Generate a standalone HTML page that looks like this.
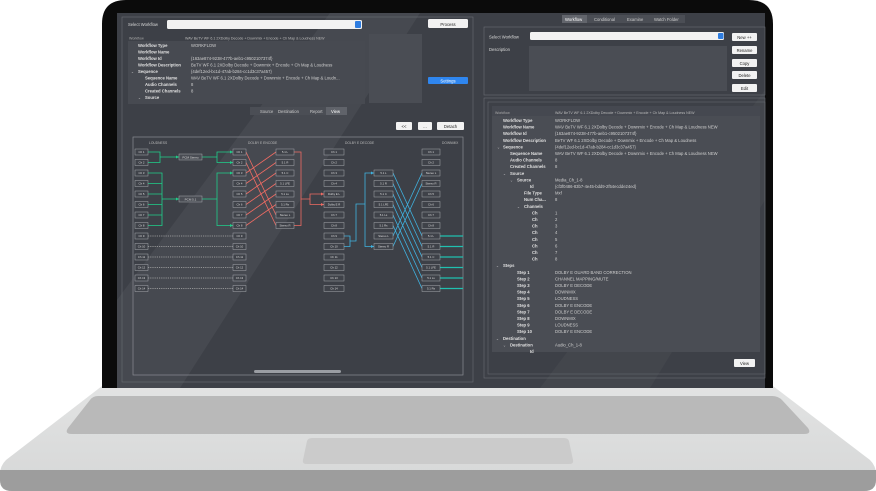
<!DOCTYPE html>
<html><head><meta charset="utf-8"><style>
html,body{margin:0;padding:0;background:#fff;width:876px;height:491px;overflow:hidden}
svg{display:block;font-family:"Liberation Sans",sans-serif}
</style></head><body>
<svg width="876" height="491" viewBox="0 0 876 491" xmlns="http://www.w3.org/2000/svg">
<defs>
<linearGradient id="base" x1="0" y1="0" x2="0" y2="1"><stop offset="0" stop-color="#e2e3e3"/><stop offset="1" stop-color="#d6d7d7"/></linearGradient>
</defs>
<!-- base -->
<path d="M102 386 L773 386 L870 460 Q876 466 876 474 L876 480 Q876 491 864 491 L12 491 Q0 491 0 480 L0 474 Q0 466 6 460 Z" fill="url(#base)"/>
<path d="M0 470 L876 470 L876 480 Q876 491 864 491 L12 491 Q0 491 0 480 Z" fill="#9d9d9d"/>
<path d="M98 396 L772 396 Q778 396 782 400 L808 428 Q812 434 804 434 L72 434 Q64 434 68 428 L90 400 Q93 396 98 396 Z" fill="#b9b9b9"/>
<path d="M312 438 L564 438 Q568 438 569 441 L573 460 Q574 464 569 464 L307 464 Q302 464 303 460 L307 441 Q308 438 312 438 Z" fill="#cbcbcb"/>
<!-- bezel -->
<path d="M126 0 L749 0 Q773 0 773 24 L773 388 L102 388 L102 24 Q102 0 126 0 Z" fill="#0b0b0b"/>
<rect x="117" y="13" width="648" height="375" fill="#3d4047"/>
<polygon points="117,300 330,13 420,13 180,388 117,388" fill="#ffffff" opacity="0.05"/>
<polygon points="540,388 765,90 765,200 650,388" fill="#ffffff" opacity="0.03"/>

<g font-size="4.2" fill="#d8d8d8">
<!-- LEFT PANEL top -->
<text x="128" y="26">Select Workflow</text>
<rect x="167" y="20" width="195" height="9" rx="1.5" fill="#f2f2f2"/>
<rect x="355" y="21" width="6" height="7" rx="1" fill="#2f7de0"/>
<rect x="428" y="19" width="40" height="9" rx="1.5" fill="#f2f2f2"/>
<text x="448" y="26" text-anchor="middle" fill="#222">Process</text>
<rect x="128" y="41" width="237" height="63" fill="#474a51"/>
<text x="129" y="39.5" fill="#aaa" font-size="3.6">Workflow</text>
<text x="185" y="39.5" fill="#bbb" font-size="3.6">WAV BeTV WF 6.1 2XDolby Decode + Downmix + Encode + Ch Map &amp; Loudness NEW</text>
<rect x="369" y="34" width="53" height="69" fill="#4a4d54"/>
<rect x="428" y="77" width="40" height="7" rx="1" fill="#2f86ef"/>
<text x="448" y="82.5" text-anchor="middle" fill="#fff">Settings</text>
<g font-weight="bold" fill="#e0e0e0">
<text x="138" y="47">Workflow Type</text><text x="138" y="53.5">Workflow Name</text><text x="138" y="60">Workflow Id</text><text x="138" y="66.5">Workflow Description</text><text x="138" y="73">Sequence</text><text x="145" y="79.5">Sequence Name</text><text x="145" y="86">Audio Channels</text><text x="145" y="92.5">Created Channels</text><text x="145" y="99">Source</text>
</g>
<text x="131" y="73" font-size="3.5">⌄</text><text x="138" y="99" font-size="3.5">⌄</text>
<g fill="#cfcfcf">
<text x="191" y="47">WORKFLOW</text><text x="191" y="60">{163ae874-9238-477b-aeb1-c9502107374f}</text><text x="191" y="66.5">BeTV WF 6.1 2XDolby Decode + Downmix + Encode + Ch Map &amp; Loudness</text><text x="191" y="73">{4def12ed-bc1d-47ab-b284-cc1d3c37a457}</text><text x="191" y="79.5">WAV BeTV WF 6.1 2XDolby Decode + Downmix + Encode + Ch Map &amp; Loudn...</text><text x="191" y="86">8</text><text x="191" y="92.5">8</text>
</g>
<!-- tabs -->
<rect x="250" y="107" width="97" height="8" fill="#4b4e55"/>
<rect x="326" y="107" width="21" height="8" fill="#60636a"/>
<text x="260" y="113" fill="#ccc">Source</text><text x="278" y="113" fill="#ccc">Destination</text><text x="310" y="113" fill="#ccc">Report</text><text x="331" y="113" fill="#fff">View</text>
<rect x="396" y="122" width="16" height="8" rx="1" fill="#f2f2f2"/><text x="404" y="128" text-anchor="middle" fill="#222">&lt;&lt;</text>
<rect x="418" y="122" width="14" height="8" rx="1" fill="#f2f2f2"/><text x="425" y="128" text-anchor="middle" fill="#222">...</text>
<rect x="437" y="122" width="27" height="8" rx="1" fill="#f2f2f2"/><text x="450.5" y="128" text-anchor="middle" fill="#222">Detach</text>
<rect x="122" y="17" width="351" height="365" fill="none" stroke="#6a6d73" stroke-width="0.6"/>
<rect x="133" y="137" width="330" height="238" fill="none" stroke="#8a8d93" stroke-width="0.7"/>
<rect x="254" y="370" width="87" height="3" rx="1.5" fill="#9a9da3"/>

<!-- DIAGRAM -->
<g font-size="3.3" fill="#bbb">
<text x="149" y="144">LOUDNESS</text><text x="248" y="144">DOLBY E ENCODE</text><text x="345" y="144">DOLBY E DECODE</text><text x="442" y="144">DOWNMIX</text>
</g>
<g fill="none" stroke-width="0.8">
<!-- green -->
<g stroke="#1fcf8a">
<path d="M148 152H160V162.5H148M160 157H179M202 157H217V152H233M217 157V162.5H233"/>
<path d="M148 173H162V225.5H148M162 199H179M202 199H217V173H233M217 199V225.5H233"/>
<path d="M148 183.5H162M148 194H162M148 204.5H162M148 215H162"/>
</g>
<!-- dashed -->
<g stroke="#aaa" stroke-dasharray="1.2 1">
<path d="M148 236H233M148 246.5H233M148 257H233M148 267.5H233M148 278H233M148 288.5H233"/>
</g>
<!-- red -->
<g stroke="#ef6b63">
<path d="M246 152L276 215M246 162.5L276 225.5M246 173L276 152M246 183.5L276 162.5M246 194L276 173M246 204.5L276 183.5M246 215L276 194M246 225.5L276 204.5"/>
<path d="M294 152H301V225.5H294M301 199H310V194H324M310 199V204.5H324"/>
</g>
<!-- blue -->
<g stroke="#3fb2e0">
<path d="M344 236H350V246.5H344M350 241H356V204H365V173H374M365 204V246.5H374"/>
<path d="M393 173L422 236M393 183.5L422 246.5M393 194L422 257M393 204.5L422 267.5M393 215L422 278M393 225.5L422 288.5M393 236L422 173M393 246.5L422 183.5"/>
</g>
<g stroke="#20c0b0" stroke-width="1.2"><path d="M440 236H463M440 246.5H463M440 257H463M440 267.5H463M440 278H463M440 288.5H463"/></g>
</g>
<g fill="#1fcf8a"><path d="M233 152l-3-1.5v3zM233 162.5l-3-1.5v3zM233 173l-3-1.5v3zM233 225.5l-3-1.5v3zM179 157l-3-1.5v3zM179 199l-3-1.5v3z"/></g>
<g fill="#ef6b63"><path d="M324 194l-3-1.5v3zM324 204.5l-3-1.5v3z"/></g>
<g fill="#3fb2e0"><path d="M374 173l-3-1.5v3zM374 246.5l-3-1.5v3z"/></g>
<g fill="#4a4d54" stroke="#a5a8ad" stroke-width="0.5">
<rect x="179" y="154" width="23" height="6"/><rect x="179" y="196" width="23" height="6"/>
</g>
<g font-size="3" fill="#ddd"><text x="190.5" y="158.3" text-anchor="middle">PCM Stereo</text><text x="190.5" y="200.3" text-anchor="middle">PCM 5.1</text></g>
<g id="boxes" fill="#3f4249" stroke="#a5a8ad" stroke-width="0.5">
<rect x="135" y="149" width="13" height="6"/><rect x="135" y="159.5" width="13" height="6"/><rect x="135" y="170" width="13" height="6"/><rect x="135" y="180.5" width="13" height="6"/><rect x="135" y="191" width="13" height="6"/><rect x="135" y="201.5" width="13" height="6"/><rect x="135" y="212" width="13" height="6"/><rect x="135" y="222.5" width="13" height="6"/><rect x="135" y="233" width="13" height="6"/><rect x="135" y="243.5" width="13" height="6"/><rect x="135" y="254" width="13" height="6"/><rect x="135" y="264.5" width="13" height="6"/><rect x="135" y="275" width="13" height="6"/><rect x="135" y="285.5" width="13" height="6"/>
<rect x="233" y="149" width="13" height="6"/><rect x="233" y="159.5" width="13" height="6"/><rect x="233" y="170" width="13" height="6"/><rect x="233" y="180.5" width="13" height="6"/><rect x="233" y="191" width="13" height="6"/><rect x="233" y="201.5" width="13" height="6"/><rect x="233" y="212" width="13" height="6"/><rect x="233" y="222.5" width="13" height="6"/><rect x="233" y="233" width="13" height="6"/><rect x="233" y="243.5" width="13" height="6"/><rect x="233" y="254" width="13" height="6"/><rect x="233" y="264.5" width="13" height="6"/><rect x="233" y="275" width="13" height="6"/><rect x="233" y="285.5" width="13" height="6"/>
<rect x="276" y="149" width="18" height="6"/><rect x="276" y="159.5" width="18" height="6"/><rect x="276" y="170" width="18" height="6"/><rect x="276" y="180.5" width="18" height="6"/><rect x="276" y="191" width="18" height="6"/><rect x="276" y="201.5" width="18" height="6"/><rect x="276" y="212" width="18" height="6"/><rect x="276" y="222.5" width="18" height="6"/>
<rect x="324" y="149" width="20" height="6"/><rect x="324" y="159.5" width="20" height="6"/><rect x="324" y="170" width="20" height="6"/><rect x="324" y="180.5" width="20" height="6"/><rect x="324" y="191" width="20" height="6"/><rect x="324" y="201.5" width="20" height="6"/><rect x="324" y="212" width="20" height="6"/><rect x="324" y="222.5" width="20" height="6"/><rect x="324" y="233" width="20" height="6"/><rect x="324" y="243.5" width="20" height="6"/><rect x="324" y="254" width="20" height="6"/><rect x="324" y="264.5" width="20" height="6"/><rect x="324" y="275" width="20" height="6"/><rect x="324" y="285.5" width="20" height="6"/>
<rect x="374" y="170" width="19" height="6"/><rect x="374" y="180.5" width="19" height="6"/><rect x="374" y="191" width="19" height="6"/><rect x="374" y="201.5" width="19" height="6"/><rect x="374" y="212" width="19" height="6"/><rect x="374" y="222.5" width="19" height="6"/><rect x="374" y="233" width="19" height="6"/><rect x="374" y="243.5" width="19" height="6"/>
<rect x="422" y="149" width="18" height="6"/><rect x="422" y="159.5" width="18" height="6"/><rect x="422" y="170" width="18" height="6"/><rect x="422" y="180.5" width="18" height="6"/><rect x="422" y="191" width="18" height="6"/><rect x="422" y="201.5" width="18" height="6"/><rect x="422" y="212" width="18" height="6"/><rect x="422" y="222.5" width="18" height="6"/><rect x="422" y="233" width="18" height="6"/><rect x="422" y="243.5" width="18" height="6"/><rect x="422" y="254" width="18" height="6"/><rect x="422" y="264.5" width="18" height="6"/><rect x="422" y="275" width="18" height="6"/><rect x="422" y="285.5" width="18" height="6"/>
</g>
<g font-size="2.8" fill="#ddd" text-anchor="middle">
<g transform="translate(141.5,0)"><text y="153.2">Ch 1</text><text y="163.7">Ch 2</text><text y="174.2">Ch 3</text><text y="184.7">Ch 4</text><text y="195.2">Ch 5</text><text y="205.7">Ch 6</text><text y="216.2">Ch 7</text><text y="226.7">Ch 8</text><text y="237.2">Ch 9</text><text y="247.7">Ch 10</text><text y="258.2">Ch 11</text><text y="268.7">Ch 12</text><text y="279.2">Ch 13</text><text y="289.7">Ch 14</text></g>
<g transform="translate(239.5,0)"><text y="153.2">Ch 1</text><text y="163.7">Ch 2</text><text y="174.2">Ch 3</text><text y="184.7">Ch 4</text><text y="195.2">Ch 5</text><text y="205.7">Ch 6</text><text y="216.2">Ch 7</text><text y="226.7">Ch 8</text><text y="237.2">Ch 9</text><text y="247.7">Ch 10</text><text y="258.2">Ch 11</text><text y="268.7">Ch 12</text><text y="279.2">Ch 13</text><text y="289.7">Ch 14</text></g>
<g transform="translate(285,0)"><text y="153.2">5.1 L</text><text y="163.7">5.1 R</text><text y="174.2">5.1 C</text><text y="184.7">5.1 LFE</text><text y="195.2">5.1 Ls</text><text y="205.7">5.1 Rs</text><text y="216.2">Stereo L</text><text y="226.7">Stereo R</text></g>
<g transform="translate(334,0)"><text y="153.2">Ch 1</text><text y="163.7">Ch 2</text><text y="174.2">Ch 3</text><text y="184.7">Ch 4</text><text y="195.2">Dolby E L</text><text y="205.7">Dolby E R</text><text y="216.2">Ch 7</text><text y="226.7">Ch 8</text><text y="237.2">Ch 9</text><text y="247.7">Ch 10</text><text y="258.2">Ch 11</text><text y="268.7">Ch 12</text><text y="279.2">Ch 13</text><text y="289.7">Ch 14</text></g>
<g transform="translate(383.5,0)"><text y="174.2">5.1 L</text><text y="184.7">5.1 R</text><text y="195.2">5.1 C</text><text y="205.7">5.1 LFE</text><text y="216.2">5.1 Ls</text><text y="226.7">5.1 Rs</text><text y="237.2">Stereo L</text><text y="247.7">Stereo R</text></g>
<g transform="translate(431,0)"><text y="153.2">Ch 1</text><text y="163.7">Ch 2</text><text y="174.2">Stereo L</text><text y="184.7">Stereo R</text><text y="195.2">Ch 5</text><text y="205.7">Ch 6</text><text y="216.2">Ch 7</text><text y="226.7">Ch 8</text><text y="237.2">5.1 L</text><text y="247.7">5.1 R</text><text y="258.2">5.1 C</text><text y="268.7">5.1 LFE</text><text y="279.2">5.1 Ls</text><text y="289.7">5.1 Rs</text></g>
</g>

<!-- RIGHT PANEL -->
<rect x="562" y="15" width="123" height="8" fill="#4b4e55"/>
<rect x="562" y="15" width="25" height="8" fill="#62656c"/>
<text x="565" y="21" fill="#fff">Workflow</text><text x="594" y="21" fill="#ccc">Conditional</text><text x="627" y="21" fill="#ccc">Examine</text><text x="654" y="21" fill="#ccc">Watch Folder</text>
<rect x="484" y="27" width="281" height="68" fill="none" stroke="#6a6d73" stroke-width="0.6"/>
<text x="489" y="38.5">Select Workflow</text>
<rect x="530" y="32" width="194" height="8" rx="1.5" fill="#f2f2f2"/>
<rect x="718" y="33" width="5.5" height="6" rx="1" fill="#2f7de0"/>
<text x="489" y="51">Description</text>
<rect x="529" y="46" width="198" height="45" fill="#4a4d54"/>
<g fill="#f2f2f2"><rect x="732" y="33" width="25" height="8" rx="1"/><rect x="732" y="46" width="25" height="8" rx="1"/><rect x="732" y="59" width="25" height="8" rx="1"/><rect x="732" y="71" width="25" height="8" rx="1"/><rect x="732" y="84" width="25" height="8" rx="1"/></g>
<g fill="#222" text-anchor="middle"><text x="744.5" y="39">New ++</text><text x="744.5" y="52">Rename</text><text x="744.5" y="65">Copy</text><text x="744.5" y="77">Delete</text><text x="744.5" y="90">Edit</text></g>
<rect x="484" y="98" width="281" height="280" fill="none" stroke="#6a6d73" stroke-width="0.6"/>
<rect x="488" y="102" width="277" height="272" fill="none" stroke="#6a6d73" stroke-width="0.5"/>
<rect x="492" y="106" width="268" height="10" fill="#454850"/>
<rect x="492" y="116" width="268" height="236" fill="#4a4d54"/>
<text x="495" y="114" fill="#aaa" font-size="3.6">Workflow</text>
<text x="555" y="114" fill="#bbb" font-size="3.6">WAV BeTV WF 6.1 2XDolby Decode + Downmix + Encode + Ch Map &amp; Loudness NEW</text>
<g font-weight="bold" fill="#e0e0e0">
<text x="503" y="122">Workflow Type</text><text x="503" y="128.6">Workflow Name</text><text x="503" y="135.2">Workflow Id</text><text x="503" y="141.8">Workflow Description</text><text x="503" y="148.4">Sequence</text>
<text x="510" y="155">Sequence Name</text><text x="510" y="161.6">Audio Channels</text><text x="510" y="168.2">Created Channels</text><text x="510" y="174.8">Source</text>
<text x="517" y="181.4">Source</text><text x="530" y="188">Id</text><text x="524" y="194.6">File Type</text><text x="524" y="201.2">Num Cha...</text><text x="524" y="207.8">Channels</text>
<text x="532" y="214.4">Ch</text><text x="532" y="221">Ch</text><text x="532" y="227.6">Ch</text><text x="532" y="234.2">Ch</text><text x="532" y="240.8">Ch</text><text x="532" y="247.4">Ch</text><text x="532" y="254">Ch</text><text x="532" y="260.6">Ch</text>
<text x="503" y="267.2">Steps</text>
<text x="517" y="273.8">Step 1</text><text x="517" y="280.4">Step 2</text><text x="517" y="287">Step 3</text><text x="517" y="293.6">Step 4</text><text x="517" y="300.2">Step 5</text><text x="517" y="306.8">Step 6</text><text x="517" y="313.4">Step 7</text><text x="517" y="320">Step 8</text><text x="517" y="326.6">Step 9</text><text x="517" y="333.2">Step 10</text>
<text x="503" y="339.8">Destination</text><text x="510" y="346.4">Destination</text><text x="530" y="353">Id</text>
</g>
<g font-size="3.5"><text x="497" y="148.4">⌄</text><text x="503" y="174.8">⌄</text><text x="510" y="181.4">⌄</text><text x="517" y="207.8">⌄</text><text x="496" y="267.2">⌄</text><text x="496" y="339.8">⌄</text><text x="503" y="346.4">⌄</text></g>
<g fill="#cfcfcf">
<text x="555" y="122">WORKFLOW</text><text x="555" y="128.6">WAV BeTV WF 6.1 2XDolby Decode + Downmix + Encode + Ch Map &amp; Loudness NEW</text><text x="555" y="135.2">{163ae874-9238-477b-aeb1-c9502107374f}</text><text x="555" y="141.8">BeTV WF 6.1 2XDolby Decode + Downmix + Encode + Ch Map &amp; Loudness</text><text x="555" y="148.4">{4def12ed-bc1d-47ab-b284-cc1d3c37a457}</text>
<text x="555" y="155">WAV BeTV WF 6.1 2XDolby Decode + Downmix + Encode + Ch Map &amp; Loudness NEW</text><text x="555" y="161.6">8</text><text x="555" y="168.2">8</text>
<text x="555" y="181.4">Media_Ch_1-8</text><text x="555" y="188">{cf3f0486-83b7-4e45-bdd9-2f54ecdde24ed}</text><text x="555" y="194.6">Mxf</text><text x="555" y="201.2">8</text>
<text x="555" y="214.4">1</text><text x="555" y="221">2</text><text x="555" y="227.6">3</text><text x="555" y="234.2">4</text><text x="555" y="240.8">5</text><text x="555" y="247.4">6</text><text x="555" y="254">7</text><text x="555" y="260.6">8</text>
<text x="555" y="273.8">DOLBY E GUARD BAND CORRECTION</text><text x="555" y="280.4">CHANNEL MAPPING/MUTE</text><text x="555" y="287">DOLBY E DECODE</text><text x="555" y="293.6">DOWNMIX</text><text x="555" y="300.2">LOUDNESS</text><text x="555" y="306.8">DOLBY E ENCODE</text><text x="555" y="313.4">DOLBY E DECODE</text><text x="555" y="320">DOWNMIX</text><text x="555" y="326.6">LOUDNESS</text><text x="555" y="333.2">DOLBY E ENCODE</text>
<text x="555" y="346.4">Audio_Ch_1-8</text>
</g>
<rect x="734" y="359" width="21" height="8" rx="1" fill="#f2f2f2"/><text x="744.5" y="365" text-anchor="middle" fill="#222">View</text>
</g>
</svg>
</body></html>
